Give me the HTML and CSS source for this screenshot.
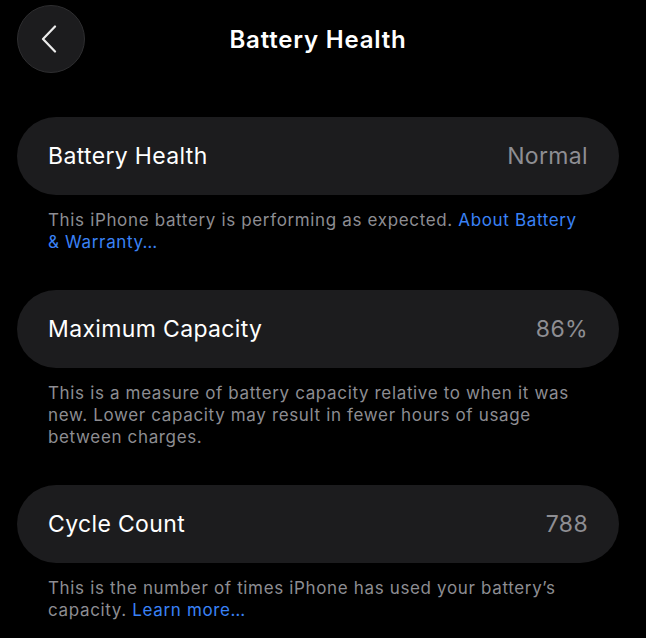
FILE: index.html
```html
<!DOCTYPE html>
<html lang="en">
<head>
<meta charset="utf-8">
<title>Battery Health</title>
<link rel="stylesheet" href="styles.css">
</head>
<body>
<div class="screen">
  <header class="nav">
    <button class="back" aria-label="Back">
      <svg width="18" height="28" viewBox="0 0 18 28" fill="none">
        <path d="M15 1.5 L3 14 L15 26.5" stroke="#ececec" stroke-width="2.2" stroke-linecap="round" stroke-linejoin="round"/>
      </svg>
    </button>
    <h1 class="title">Battery Health</h1>
    <span class="spacer"></span>
  </header>

  <main class="content">
    <section class="group group-first">
      <div class="card">
        <span class="label">Battery Health</span>
        <span class="value">Normal</span>
      </div>
      <p class="footer">This iPhone battery is performing as expected. <a class="link" href="#">About Battery &amp; Warranty…</a></p>
    </section>

    <section class="group">
      <div class="card">
        <span class="label">Maximum Capacity</span>
        <span class="value">86%</span>
      </div>
      <p class="footer">This is a measure of battery capacity relative to when it was new. Lower capacity may result in fewer hours of usage between charges.</p>
    </section>

    <section class="group">
      <div class="card">
        <span class="label">Cycle Count</span>
        <span class="value">788</span>
      </div>
      <p class="footer">This is the number of times iPhone has used your battery’s capacity. <a class="link" href="#">Learn more…</a></p>
    </section>
  </main>
</div>
</body>
</html>
```

FILE: styles.css
```css
html, body {
  margin: 0;
  padding: 0;
  background: #000;
}

body {
  font-family: Inter, "Noto Sans", "Liberation Sans", sans-serif;
  color: #fff;
  -webkit-font-smoothing: antialiased;
}

.screen {
  width: 646px;
  height: 638px;
  overflow: hidden;
  background: #000;
}

.nav {
  display: grid;
  grid-template-columns: 68px 1fr 68px;
  align-items: center;
  padding: 5px 27px 0 17px;
  height: 68px;
}

.back {
  width: 68px;
  height: 68px;
  border-radius: 50%;
  background: #1c1c1e;
  border: 1px solid #2e2e30;
  display: flex;
  align-items: center;
  justify-content: center;
  padding: 0 4px 0 0;
  box-sizing: border-box;
  cursor: pointer;
}

.title {
  margin: 0;
  text-align: center;
  font-size: 24px;
  font-weight: 600;
  letter-spacing: 0.8px;
  color: #fff;
}

.content {
  display: flex;
  flex-direction: column;
  padding: 0 27px 0 17px;
}

.group-first {
  margin-top: 44px;
}

.group {
  display: flex;
  flex-direction: column;
  margin-bottom: 37px;
}

.card {
  height: 78px;
  border-radius: 39px;
  background: #1c1c1e;
  display: flex;
  align-items: center;
  justify-content: space-between;
  padding: 0 31px;
}

.label {
  font-size: 23px;
  color: #fff;
  letter-spacing: 0.35px;
}

.value {
  font-size: 23px;
  color: #8e8e93;
  letter-spacing: 0.35px;
}

.footer {
  margin: 14px 0 0;
  padding: 0 31px;
  font-size: 17px;
  line-height: 22px;
  color: #8d8d92;
  letter-spacing: 0.65px;
}

.link {
  color: #3a82f6;
  text-decoration: none;
}
```
